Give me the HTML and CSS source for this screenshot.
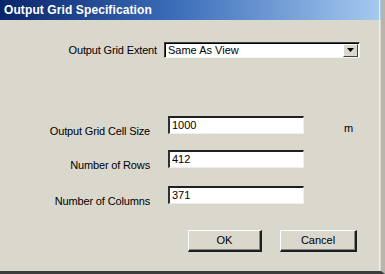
FILE: index.html
```html
<!doctype html>
<html>
<head>
<meta charset="utf-8">
<title>Output Grid Specification</title>
<link rel="stylesheet" href="styles.css">
</head>
<body>
<div class="dialog">
	<div class="titlebar">Output Grid Specification</div>
	<div class="content">
		<div class="row extent">
			<label class="lbl">Output Grid Extent</label>
			<div class="combo">
				<span class="combo-text">Same As View</span>
				<span class="combo-btn"><svg width="7" height="4" viewBox="0 0 7 4"><path d="M0 0H7L3.5 4Z" fill="#000"/></svg></span>
			</div>
		</div>

		<div class="row field first">
			<label class="lbl">Output Grid Cell Size</label>
			<div class="input">1000</div>
			<span class="unit">m</span>
		</div>
		<div class="row field second">
			<label class="lbl">Number of Rows</label>
			<div class="input">412</div>
		</div>
		<div class="row field third">
			<label class="lbl">Number of Columns</label>
			<div class="input">371</div>
		</div>

		<div class="buttons">
			<div class="btn ok">OK</div>
			<div class="btn cancel">Cancel</div>
		</div>
	</div>
</div>
</body>
</html>
```

FILE: styles.css
```css
*{margin:0; padding:0; box-sizing:border-box;}
body{background:#dad7cd; font-family:"Liberation Sans", Arial, sans-serif; font-size:11px; color:#000;}
.dialog{width:385px; height:274px; background:#dad7cd; border-right:4px solid #b8b5ac; border-bottom:3px solid #3c3c3c; position:relative;}
.dialog:after{content:""; position:absolute; top:0; bottom:0; right:1px; width:1px; background:#f2f0ea;}
.titlebar{height:20px; background:linear-gradient(to right, #0a246a 0%, #3a6cb8 45%, #a6caf0 100%); color:#fff; font-weight:bold; font-size:12px; padding:3px 0 0 4px; letter-spacing:0.1px;}
.content{padding-top:22px;}
.row{display:flex; align-items:flex-start;}
.lbl{text-align:right; line-height:13px; letter-spacing:-0.15px;}

.extent .lbl{width:157px; padding-top:2px;}
.combo{margin-left:7px; width:196px; height:16px; background:#fff; border-top:1px solid #404040; border-left:1px solid #404040; border-right:1px solid #f4f4f4; border-bottom:1px solid #f4f4f4; box-shadow:inset 1px 1px 0 #000; display:flex; align-items:center; padding-left:3px;}
.combo-text{flex:1; line-height:13px; padding-top:1px;}
.combo-btn{width:15px; height:13px; margin-right:1px; background:#dad7cd; border-top:1px solid #fff; border-left:1px solid #fff; border-right:1px solid #404040; border-bottom:1px solid #404040; display:flex; align-items:center; justify-content:center;}

.field .lbl{width:150px; padding-top:9px;}
.input{margin-left:18px; width:136px; height:18px; background:#fff; border-top:2px solid #202020; border-left:2px solid #303030; border-right:1px solid #eeeeea; border-bottom:1px solid #eeeeea; padding:1px 0 0 2px; line-height:13px;}
.unit{margin-left:40px; padding-top:6px; line-height:13px;}
.first{margin-top:58px;}
.second{margin-top:12px;}
.third{margin-top:14px;}

.buttons{display:flex; padding-left:188px; margin-top:22px;}
.btn{height:22px; background:#dad7cd; border-top:1px solid #fff; border-left:1px solid #fff; border-right:2px solid #1e1e1e; border-bottom:2px solid #1e1e1e; box-shadow:inset -1px -1px 0 #8a8780; text-align:center; line-height:18px;}
.ok{width:74px;}
.cancel{width:77px; margin-left:18px;}
```
